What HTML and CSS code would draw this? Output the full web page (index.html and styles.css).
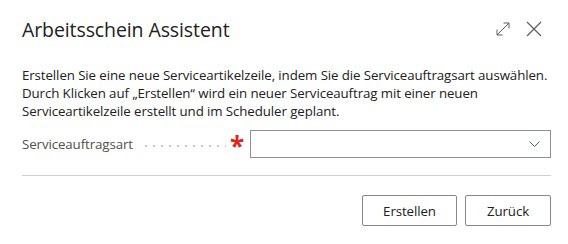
FILE: index.html
```html
<!DOCTYPE html>
<html lang="de">
<head>
<meta charset="utf-8">
<link rel="stylesheet" href="styles.css">
</head>
<body>
<div class="dialog">
  <div class="header">
    <h1 class="title">Arbeitsschein Assistent</h1>
    <div class="actions">
      <svg class="icon" width="16" height="16" viewBox="0 0 16 16"><path d="M2 14 L14 2 M8.5 2 H14 V7.5 M2 8.5 V14 H7.5" fill="none" stroke="#616161" stroke-width="1"/></svg>
      <svg class="icon" width="16" height="16" viewBox="0 0 16 16"><path d="M1 1 L15 15 M15 1 L1 15" fill="none" stroke="#616161" stroke-width="1.3"/></svg>
    </div>
  </div>
  <p class="intro">Erstellen Sie eine neue Serviceartikelzeile, indem Sie die Serviceauftragsart auswählen.<br>Durch Klicken auf „Erstellen“ wird ein neuer Serviceauftrag mit einer neuen<br>Serviceartikelzeile erstellt und im Scheduler geplant.</p>
  <div class="field">
    <span class="label">Serviceauftragsart</span>
    <span class="leader"></span>
    <span class="req">*</span>
    <div class="select">
      <svg width="11" height="7" viewBox="0 0 11 7"><path d="M0.5 0.5 L5.5 5.5 L10.5 0.5" fill="none" stroke="#4a5a78" stroke-width="1"/></svg>
    </div>
  </div>
  <div class="sep"></div>
  <div class="footer">
    <button class="btn btn-create">Erstellen</button>
    <button class="btn btn-back">Zurück</button>
  </div>
</div>
</body>
</html>
```
FILE: styles.css
```css
html, body {
  margin: 0;
  padding: 0;
  background: #fff;
}
body {
  font-family: "Open Sans", "Noto Sans", sans-serif;
  color: #212121;
}
.dialog {
  width: 568px;
  height: 244px;
  box-sizing: border-box;
  padding: 14px 17px 0 22px;
}
.header {
  display: flex;
  align-items: center;
  justify-content: space-between;
  height: 30px;
}
.title {
  margin: 0;
  font-size: 19.5px;
  font-weight: 400;
  color: #212121;
  letter-spacing: -0.1px;
}
.actions {
  display: flex;
  align-items: center;
  gap: 15px;
  padding-right: 9px;
}
.icon { display: block; }
.intro {
  margin: 22px 0 0 0;
  font-size: 13.3px;
  line-height: 18px;
  color: #212121;
  letter-spacing: -0.1px;
  white-space: nowrap;
}
.field {
  display: flex;
  align-items: center;
  margin-top: 10px;
  height: 28px;
}
.label {
  font-size: 13.3px;
  color: #505050;
  letter-spacing: -0.1px;
  width: 110px;
  white-space: nowrap;
}
.leader {
  width: 84px;
  height: 2px;
  margin: 3px 0 0 10px;
  background-image: radial-gradient(circle, #c8c8c8 0.8px, transparent 1px);
  background-size: 8px 2px;
  background-repeat: repeat-x;
}
.req {
  color: #e0251b;
  font-size: 26px;
  font-weight: 700;
  line-height: 1;
  margin: 4px 7px 0 4px;
  width: 13px;
  text-align: center;
}
.select {
  flex: 1;
  height: 28px;
  box-sizing: border-box;
  border: 1px solid #8a8f99;
  display: flex;
  align-items: center;
  justify-content: flex-end;
  padding-right: 10px;
}
.select svg { display: block; margin-top: 1px; }
.sep {
  height: 1px;
  background: #d1d1d1;
  margin-top: 17px;
}
.footer {
  display: flex;
  justify-content: flex-end;
  gap: 8px;
  margin-top: 19px;
}
.btn {
  font-family: "Open Sans", "Noto Sans", sans-serif;
  font-size: 13.3px;
  color: #212121;
  background: #fff;
  border: 1px solid #8a8886;
  border-radius: 2px;
  height: 31px;
  padding: 0;
  letter-spacing: -0.1px;
}
.btn-create { width: 95px; }
.btn-back { width: 86px; }
```
